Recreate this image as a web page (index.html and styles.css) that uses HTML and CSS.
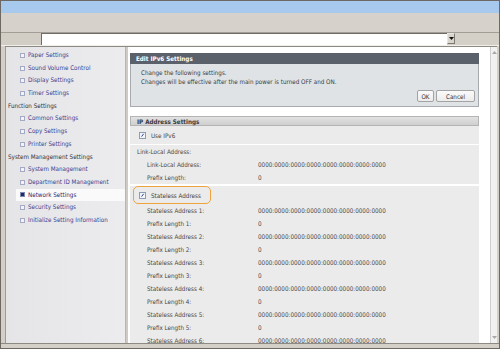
FILE: index.html
```html
<!DOCTYPE html>
<html>
<head>
<meta charset="utf-8">
<link rel="stylesheet" href="styles.css">
</head>
<body>
<div class="win">
  <div class="titlebar"></div>
  <div class="toolbar"></div>
  <div class="addr">
    <div class="addr-left"></div>
    <div class="addr-input"></div>
    <div class="dd"><svg width="5" height="3" viewBox="0 0 5 3"><path d="M0 0H5L2.5 3Z" fill="#111"/></svg></div>
    <div class="addr-right"></div>
  </div>
  <div class="main">
    <nav class="side">
      <div class="item"><span class="bul"></span>Paper Settings</div>
      <div class="item"><span class="bul"></span>Sound Volume Control</div>
      <div class="item"><span class="bul"></span>Display Settings</div>
      <div class="item"><span class="bul"></span>Timer Settings</div>
      <div class="grp">Function Settings</div>
      <div class="item"><span class="bul"></span>Common Settings</div>
      <div class="item"><span class="bul"></span>Copy Settings</div>
      <div class="item"><span class="bul"></span>Printer Settings</div>
      <div class="grp">System Management Settings</div>
      <div class="item"><span class="bul"></span>System Management</div>
      <div class="item"><span class="bul"></span>Department ID Management</div>
      <div class="item active"><span class="bul"></span>Network Settings</div>
      <div class="item"><span class="bul"></span>Security Settings</div>
      <div class="item"><span class="bul"></span>Initialize Setting Information</div>
    </nav>
    <div class="split"></div>
    <div class="pane">
      <div class="dlg-head">Edit IPv6 Settings</div>
      <div class="dlg-body">
        <p class="msg">Change the following settings.</p>
        <p class="msg">Changes will be effective after the main power is turned OFF and ON.</p>
        <div class="btns"><span class="btn ok">OK</span><span class="btn cancel">Cancel</span></div>
      </div>
      <div class="sec-head">IP Address Settings</div>
      <div class="blk use">
        <svg class="cb" width="7" height="7" viewBox="0 0 7 7"><rect x="0.5" y="0.5" width="6" height="6" fill="#f3f5f9" stroke="#8e9cb2"/><path d="M2.6 4.6L4.6 1.8" stroke="#2b4595" stroke-width="1"/></svg>
        <span>Use IPv6</span>
      </div>
      <div class="blk ll">
        <div class="sub">Link-Local Address:</div>
        <div class="kv"><span>Link-Local Address:</span><span>0000:0000:0000:0000:0000:0000:0000:0000</span></div>
        <div class="kv tall"><span>Prefix Length:</span><span>0</span></div>
      </div>
      <div class="blk sl">
        <div class="sl-row">
          <span class="hl">
            <svg class="cb" width="7" height="7" viewBox="0 0 7 7"><rect x="0.5" y="0.5" width="6" height="6" fill="#f3f5f9" stroke="#8e9cb2"/><path d="M2.6 4.6L4.6 1.8" stroke="#2b4595" stroke-width="1"/></svg>
            <span>Stateless Address</span>
          </span>
        </div>
        <div class="kv"><span>Stateless Address 1:</span><span>0000:0000:0000:0000:0000:0000:0000:0000</span></div>
        <div class="kv"><span>Prefix Length 1:</span><span>0</span></div>
        <div class="kv"><span>Stateless Address 2:</span><span>0000:0000:0000:0000:0000:0000:0000:0000</span></div>
        <div class="kv"><span>Prefix Length 2:</span><span>0</span></div>
        <div class="kv"><span>Stateless Address 3:</span><span>0000:0000:0000:0000:0000:0000:0000:0000</span></div>
        <div class="kv"><span>Prefix Length 3:</span><span>0</span></div>
        <div class="kv"><span>Stateless Address 4:</span><span>0000:0000:0000:0000:0000:0000:0000:0000</span></div>
        <div class="kv"><span>Prefix Length 4:</span><span>0</span></div>
        <div class="kv"><span>Stateless Address 5:</span><span>0000:0000:0000:0000:0000:0000:0000:0000</span></div>
        <div class="kv"><span>Prefix Length 5:</span><span>0</span></div>
        <div class="kv"><span>Stateless Address 6:</span><span>0000:0000:0000:0000:0000:0000:0000:0000</span></div>
      </div>
    </div>
    <div class="scroll">
      <svg class="arr" width="5" height="3" viewBox="0 0 5 3"><path d="M0 3H5L2.5 0Z" fill="#a8a8a8"/></svg>
      <svg class="arr" width="5" height="3" viewBox="0 0 5 3"><path d="M0 0H5L2.5 3Z" fill="#a8a8a8"/></svg>
    </div>
  </div>
  <div class="bottom"></div>
</div>
</body>
</html>
```
FILE: styles.css
```css
html, body {
  margin: 0;
  padding: 0;
  width: 500px;
  height: 349px;
  overflow: hidden;
  background: #d4d0c8;
}
.win {
  box-sizing: border-box;
  width: 500px;
  height: 349px;
  border: 1px solid #6d6962;
  background: #d4d0c8;
  display: flex;
  flex-direction: column;
  font-family: "DejaVu Sans Condensed", "DejaVu Sans", sans-serif;
  font-size: 6.25px;
  color: #474747;
}
.titlebar {
  height: 12px;
  background: #a7c9ee;
}
.toolbar {
  height: 19px;
  background: #d6d2cb;
  border-bottom: 1px solid #a29e97;
}
.addr {
  height: 12px;
  display: flex;
  border-bottom: 1px solid #f1efea;
}
.addr-left {
  width: 40px;
  background: #d2cec6;
}
.addr-input {
  width: 405px;
  background: #fff;
  border-top: 1px solid #6f6c66;
  border-left: 1px solid #6f6c66;
}
.dd {
  width: 8px;
  height: 11px;
  background: #d8d5cf;
  border: 1px solid #7d7a74;
  border-left-color: #e8e6e2;
  border-top-color: #e8e6e2;
  box-sizing: border-box;
  display: flex;
  align-items: center;
  justify-content: center;
}
.addr-right {
  flex: 1;
}
.main {
  flex: 1;
  display: flex;
  margin: 0 2px 0 4px;
  border-top: 1px solid #8d8a84;
  min-height: 0;
}
.side {
  width: 120px;
  box-sizing: border-box;
  border-left: 1px solid #9d9b97;
  background: linear-gradient(to right, #e5e5e8, #ececef);
  padding: 2px 0 0 1px;
  display: flex;
  flex-direction: column;
}
.item, .grp {
  height: 12.7px;
  line-height: 12.7px;
  white-space: nowrap;
  display: flex;
  align-items: center;
}
.grp {
  padding-left: 1px;
  color: #333;
}
.item {
  padding-left: 13px;
  color: #3a4290;
}
.bul {
  width: 3px;
  height: 3px;
  border: 1px solid #a4aac4;
  background: #f2f3f7;
  margin-right: 3px;
  flex: none;
}
.item.active {
  margin-left: 9px;
  padding-left: 4px;
  background: #fafafb;
  color: #1f2a72;
}
.item.active .bul {
  background: #1c2a66;
  border-color: #7d86b0;
}
.split {
  width: 3px;
  background: #cfcbc4;
  border-left: 1px solid #b9b6b0;
  box-sizing: border-box;
}
.pane {
  width: 362px;
  box-sizing: border-box;
  background: #fff;
  padding: 6px 11px 0 2px;
  overflow: hidden;
}
.dlg-head {
  height: 11px;
  line-height: 11px;
  background: #5b616a;
  color: #fff;
  font-weight: bold;
  padding-left: 6px;
}
.dlg-body {
  height: 43px;
  box-sizing: border-box;
  background: #dfe3e6;
  border: 1px solid #a7abaf;
  border-top: none;
  padding: 5px 3px 0 10px;
  display: flex;
  flex-direction: column;
}
.msg {
  margin: 0;
  line-height: 8.5px;
  color: #3d3d3d;
}
.btns {
  display: flex;
  justify-content: flex-end;
  gap: 2px;
  margin-top: 4px;
}
.btn {
  height: 12px;
  box-sizing: border-box;
  border: 1px solid #a3a3a3;
  border-radius: 2px;
  background: linear-gradient(#fbfbfb, #ececec);
  color: #333;
  display: flex;
  align-items: center;
  justify-content: center;
}
.btn.ok { width: 17px; }
.btn.cancel { width: 39px; }
.sec-head {
  margin-top: 9px;
  height: 10px;
  line-height: 9px;
  box-sizing: border-box;
  border: 1px solid #b4b4b4;
  background: linear-gradient(#e2e2e2, #cfcfcf);
  color: #3a3a3a;
  font-weight: bold;
  padding-left: 6px;
}
.blk {
  background: #ebebeb;
}
.use {
  height: 18px;
  display: flex;
  align-items: center;
  padding-left: 9px;
  gap: 5px;
  border-bottom: 1px solid #fff;
}
.cb {
  flex: none;
  display: block;
}
.ll {
  height: 39px;
  border-bottom: 2px solid #fff;
}
.sub {
  height: 13px;
  line-height: 14px;
  padding-left: 7px;
}
.kv {
  display: grid;
  grid-template-columns: 111px auto;
  padding-left: 17px;
  height: 13px;
  line-height: 13px;
  white-space: nowrap;
}
.kv.tall {
  line-height: 14px;
}
.sl-row {
  height: 18px;
  display: flex;
  align-items: center;
}
.hl {
  margin-left: 3px;
  width: 78px;
  height: 18px;
  box-sizing: border-box;
  border: 1.5px solid #f0a23c;
  border-radius: 5px;
  display: flex;
  align-items: center;
  padding-left: 5px;
  gap: 5px;
  color: #3d3d3d;
}
.scroll {
  flex: 1;
  background: #f1f1f1;
  border-left: 1px solid #cfcfcf;
  display: flex;
  flex-direction: column;
  justify-content: space-between;
  align-items: center;
  padding: 4px 0 4px;
}
.arr {
  display: block;
}
.bottom {
  height: 4px;
  border-top: 1px solid #8d8a84;
  background: #d4d0c8;
}
```
